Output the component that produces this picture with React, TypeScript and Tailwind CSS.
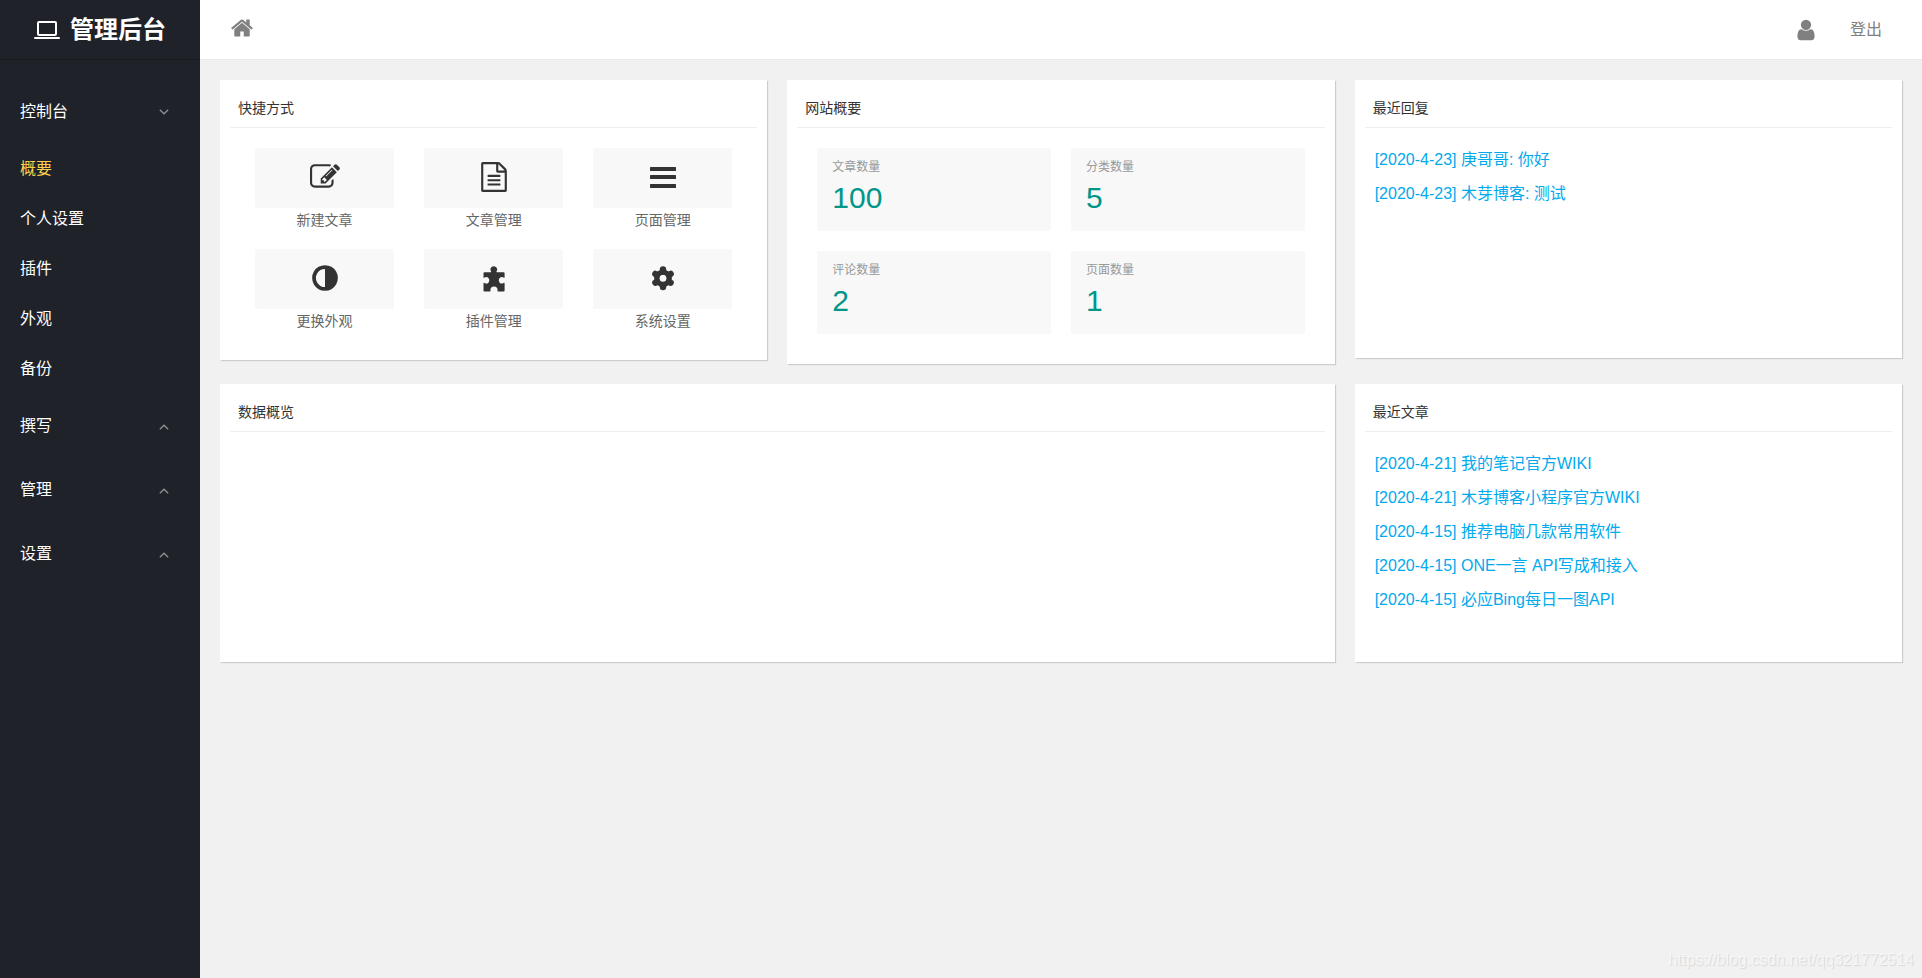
import type { ReactNode } from "react"
import clsx from "clsx"

const icons = {
  home: "M1472 992v480q0 26-19 45t-45 19h-384v-384h-256v384h-384q-26 0-45-19t-19-45v-480q0-1 .5-3t.5-3l575-474 575 474q1 2 1 6zm223-69l-62 74q-8 9-21 11h-3q-13 0-21-7l-692-577-692 577q-12 8-24 7-13-2-21-11l-62-74q-8-10-7-23.5t11-21.5l719-599q32-26 76-26t76 26l244 204v-195q0-14 9-23t23-9h192q14 0 23 9t9 23v408l219 182q10 8 11 21.5t-7 23.5z",
  user: "M1536 1399q0 109-62.5 187t-150.5 78h-854q-88 0-150.5-78t-62.5-187q0-85 8.5-160.5t31.5-152 58.5-131 94-89 134.5-34.5q131 128 313 128t313-128q76 0 134.5 34.5t94 89 58.5 131 31.5 152 8.5 160.5zm-256-887q0 159-112.5 271.5t-271.5 112.5-271.5-112.5-112.5-271.5 112.5-271.5 271.5-112.5 271.5 112.5 112.5 271.5z",
  edit: "M888 1184l116-116-152-152-116 116v56h96v96h56zm440-720q-16-16-33 1l-350 350q-17 17-1 33t33-1l350-350q17-17 1-33zm80 594v190q0 119-84.5 203.5t-203.5 84.5h-832q-119 0-203.5-84.5t-84.5-203.5v-832q0-119 84.5-203.5t203.5-84.5h832q63 0 117 25 15 7 18 23 3 17-9 29l-49 49q-14 14-32 8-23-6-45-6h-832q-66 0-113 47t-47 113v832q0 66 47 113t113 47h832q66 0 113-47t47-113v-126q0-13 9-22l64-64q15-15 35-7t20 29zm-96-738l288 288-672 672h-288v-288zm444 132l-92 92-288-288 92-92q28-28 68-28t68 28l152 152q28 28 28 68t-28 68z",
  file: "M1596 380q28 28 48 76t20 88v1152q0 40-28 68t-68 28h-1344q-40 0-68-28t-28-68v-1600q0-40 28-68t68-28h896q40 0 88 20t76 48zm-444-244v376h376q-10-29-22-41l-313-313q-12-12-41-22zm384 1528v-1024h-416q-40 0-68-28t-28-68v-416h-768v1536h1280zm-1024-864q0-14 9-23t23-9h704q14 0 23 9t9 23v64q0 14-9 23t-23 9h-704q-14 0-23-9t-9-23v-64zm736 224q14 0 23 9t9 23v64q0 14-9 23t-23 9h-704q-14 0-23-9t-9-23v-64q0-14 9-23t23-9h704zm0 256q14 0 23 9t9 23v64q0 14-9 23t-23 9h-704q-14 0-23-9t-9-23v-64q0-14 9-23t23-9h704z",
  adjust: "M896 1440v-1088q-148 0-273 73t-198 198-73 273 73 273 198 198 273 73zm768-544q0 209-103 385.5t-279.5 279.5-385.5 103-385.5-103-279.5-279.5-103-385.5 103-385.5 279.5-279.5 385.5-103 385.5 103 279.5 279.5 103 385.5z",
}

const Icon = ({ name, className }: { name: keyof typeof icons; className: string }) => (
  <svg viewBox="0 0 1792 1792" fill="currentColor" className={className} aria-hidden="true">
    <path d={icons[name]} />
  </svg>
)

const BarsIcon = () => (
  <svg viewBox="0 0 30 30" fill="currentColor" className="size-[30px]" aria-hidden="true">
    <rect x="2" y="5" width="26" height="4" rx="0.5" />
    <rect x="2" y="13" width="26" height="4" rx="0.5" />
    <rect x="2" y="22" width="26" height="4" rx="0.5" />
  </svg>
)

const PuzzleIcon = () => (
  <svg viewBox="0 0 30 30" fill="currentColor" className="size-[30px]" aria-hidden="true">
    <path d="M4.5 10.3Q4.5 9.3 5.5 9.3H11.7Q12.5 9.3 12 8.3A3.3 3.3 0 1 1 17.6 8.3Q17.1 9.3 17.9 9.3H24.6Q25.6 9.3 25.6 10.3V14.2Q25.6 15.2 24.6 14.6A3.2 3.2 0 1 0 24.6 20Q25.6 19.4 25.6 20.4V27.4Q25.6 28.4 24.6 28.4H18.9Q18.2 28.4 18.6 27.2A3.6 3.6 0 1 0 11.4 27.2Q11.8 28.4 11.1 28.4H5.5Q4.5 28.4 4.5 27.4V20.4Q4.5 19.4 5.5 20A3.2 3.2 0 1 0 5.5 14.6Q4.5 15.2 4.5 14.2Z" />
  </svg>
)

const GearIcon = () => (
  <svg viewBox="0 0 30 30" fill="none" stroke="currentColor" className="size-[30px]" aria-hidden="true">
    <circle cx="15" cy="15.3" r="6.2" strokeWidth="5.4" />
    {[0, 60, 120, 180, 240, 300].map((angle) => (
      <path key={angle} d="M15 6.5V8.5" strokeWidth="6.4" strokeLinecap="round" transform={`rotate(${angle} 15 15.3)`} />
    ))}
  </svg>
)

const LaptopIcon = () => (
  <svg viewBox="0 0 26 18" fill="none" stroke="currentColor" className="h-[18px] w-[26px]" aria-hidden="true">
    <rect x="4" y="1" width="18" height="13" rx="1" strokeWidth="2" />
    <path d="M1 17H25" strokeWidth="2" strokeLinecap="round" />
  </svg>
)

const Chevron = ({ open }: { open?: boolean }) => (
  <svg
    viewBox="0 0 10 6"
    fill="none"
    stroke="currentColor"
    className={clsx("h-1.5 w-2.5 text-[#8f9095]", !open && "mt-0.5 rotate-180")}
    aria-hidden="true"
  >
    <path d="M0.8 0.8L5 4.8L9.2 0.8" strokeWidth="1.3" />
  </svg>
)

const menu = [
  { title: "控制台", items: ["概要", "个人设置", "插件", "外观", "备份"] },
  { title: "撰写", items: [] },
  { title: "管理", items: [] },
  { title: "设置", items: [] },
]

const shortcuts = [
  { label: "新建文章", icon: <Icon name="edit" className="size-[30px]" /> },
  { label: "文章管理", icon: <Icon name="file" className="size-[30px]" /> },
  { label: "页面管理", icon: <BarsIcon /> },
  { label: "更换外观", icon: <Icon name="adjust" className="size-[30px]" /> },
  { label: "插件管理", icon: <PuzzleIcon /> },
  { label: "系统设置", icon: <GearIcon /> },
]

const stats = [
  { label: "文章数量", value: 100 },
  { label: "分类数量", value: 5 },
  { label: "评论数量", value: 2 },
  { label: "页面数量", value: 1 },
]

const replies = ["[2020-4-23] 庚哥哥: 你好", "[2020-4-23] 木芽博客: 测试"]

const articles = [
  "[2020-4-21] 我的笔记官方WIKI",
  "[2020-4-21] 木芽博客小程序官方WIKI",
  "[2020-4-15] 推荐电脑几款常用软件",
  "[2020-4-15] ONE一言 API写成和接入",
  "[2020-4-15] 必应Bing每日一图API",
]

const Sidebar = () => (
  <aside className="w-[200px] shrink-0 bg-[#20222a] text-white">
    <div className="flex h-[60px] items-center justify-center gap-2.5 border-b border-[#1a1c22]">
      <LaptopIcon />
      <h1 className="text-2xl font-bold">管理后台</h1>
    </div>
    <nav className="pt-5">
      {menu.map((group) => (
        <div key={group.title}>
          <button className="flex h-16 w-full items-center justify-between pr-[31px] pl-5">
            {group.title}
            <Chevron open={group.items.length > 0} />
          </button>
          {group.items.map((item, i) => (
            <a key={item} href="#" className={clsx("flex h-[50px] items-center pl-5", i === 0 && "text-[#ffd04b]")}>
              {item}
            </a>
          ))}
        </div>
      ))}
    </nav>
  </aside>
)

const Card = ({ title, className, children }: { title: string; className?: string; children?: ReactNode }) => (
  <section className={clsx("min-h-[278px] bg-white shadow-[1px_1px_1px_#ccc]", className)}>
    <h2 className="mx-2.5 border-b border-[#eeeef3] px-2 pt-[18px] pb-[9px] text-sm text-[#333]">{title}</h2>
    {children}
  </section>
)

const LinkList = ({ items }: { items: string[] }) => (
  <ul className="px-5 pt-[15px] leading-[34px] text-[#01aaed]">
    {items.map((item) => (
      <li key={item}><a href="#">{item}</a></li>
    ))}
  </ul>
)

export default function App() {
  return (
    <div className="flex min-h-screen bg-[#f1f1f1] font-['Liberation_Sans','Noto_Sans_CJK_SC',sans-serif] text-base">
      <Sidebar />
      <div className="flex min-w-0 flex-1 flex-col">
        <header className="flex h-[60px] items-center justify-between border-b border-[#eaeaea] bg-white pr-10 pl-[30px] text-[#808080]">
          <a href="#" aria-label="首页"><Icon name="home" className="mb-1 size-6" /></a>
          <div className="flex items-center gap-8">
            <a href="#" aria-label="用户"><Icon name="user" className="size-6" /></a>
            <a href="#">登出</a>
          </div>
        </header>
        <main className="grid grid-cols-3 items-start gap-5 p-5">
          <Card title="快捷方式">
            <div className="grid grid-cols-3 gap-x-[30px] gap-y-[17px] px-[35px] pt-5 pb-[27px]">
              {shortcuts.map(({ label, icon }) => (
                <a key={label} href="#" className="block text-center text-sm leading-6 text-[#666]">
                  <span className="flex h-[60px] justify-center rounded-xs bg-[#f8f8f8] pt-3.5 text-[#333]">{icon}</span>
                  <span className="block">{label}</span>
                </a>
              ))}
            </div>
          </Card>
          <Card title="网站概要">
            <div className="grid grid-cols-2 gap-5 px-[30px] pt-5 pb-[30px]">
              {stats.map(({ label, value }) => (
                <div key={label} className="h-[83px] rounded-xs bg-[#f8f8f8] px-[15px] pt-2.5">
                  <h3 className="text-xs leading-[18px] text-[#999]">{label}</h3>
                  <p className="text-3xl leading-[44px] text-[#009688]">{value}</p>
                </div>
              ))}
            </div>
          </Card>
          <Card title="最近回复"><LinkList items={replies} /></Card>
          <Card title="数据概览" className="col-span-2" />
          <Card title="最近文章"><LinkList items={articles} /></Card>
        </main>
        <p className="mt-auto pr-2 pb-1.5 text-right text-white/60 [text-shadow:1px_1px_1px_#d8d8d8]">
          https://blog.csdn.net/qq321772514
        </p>
      </div>
    </div>
  )
}
